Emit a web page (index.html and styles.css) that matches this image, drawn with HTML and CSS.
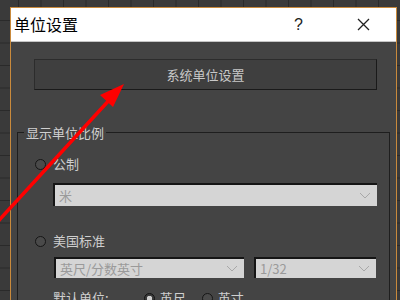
FILE: index.html
```html
<!DOCTYPE html>
<html lang="zh-CN">
<head>
<meta charset="utf-8">
<link rel="stylesheet" href="styles.css">
</head>
<body>
<div class="dialog">
  <div class="titlebar">
    <span class="title">单位设置</span>
    <span class="help">?</span>
    <svg class="close" width="13" height="13" viewBox="0 0 13 13"><path d="M1 1L12 12M12 1L1 12" stroke="#222" stroke-width="1.3" fill="none"/></svg>
  </div>
  <div class="body">
    <div class="sysbtn">系统单位设置</div>
    <fieldset class="group">
      <legend>显示单位比例</legend>
      <div class="row r1"><span class="radio"></span><span>公制</span></div>
      <div class="select s1"><span>米</span><svg width="12" height="7" viewBox="0 0 12 7"><path d="M1 1L6 6L11 1" stroke="#a8a8a8" fill="none"/></svg></div>
      <div class="row r2"><span class="radio"></span><span>美国标准</span></div>
      <div class="selrow">
        <div class="select s2"><span>英尺/分数英寸</span><svg width="12" height="7" viewBox="0 0 12 7"><path d="M1 1L6 6L11 1" stroke="#a8a8a8" fill="none"/></svg></div>
        <div class="select s3"><span>1/32</span><svg width="12" height="7" viewBox="0 0 12 7"><path d="M1 1L6 6L11 1" stroke="#a8a8a8" fill="none"/></svg></div>
      </div>
      <div class="row r4">
        <span class="deflabel">默认单位:</span>
        <span class="radio on"></span><span class="opt">英尺</span>
        <span class="radio"></span><span>英寸</span>
      </div>
    </fieldset>
  </div>
</div>
<svg class="arrow" width="400" height="300" viewBox="0 0 400 300">
  <line x1="-10" y1="230" x2="112" y2="97" stroke="#ff0000" stroke-width="3.5"/>
  <polygon points="124,84 100,95 113,107" fill="#ff0000"/>
</svg>
</body>
</html>
```
FILE: styles.css
```css
html, body {
  margin: 0;
  padding: 0;
  width: 400px;
  height: 300px;
  overflow: hidden;
}
body {
  position: relative;
  font-family: "Noto Sans CJK SC", "Noto Sans", sans-serif;
  background-color: #3a3a3a;
  background-image:
    linear-gradient(to right, #2a2a2a 1px, transparent 1px),
    linear-gradient(to bottom, #2a2a2a 1px, transparent 1px);
  background-size: 22.5px 22.5px;
  background-position: 18px 20px;
  padding-top: 7px;
  box-sizing: border-box;
}
.dialog {
  margin-left: 10px;
  width: 387px;
  height: 320px;
  border: 1px solid #c98a3c;
  border-bottom: none;
  box-sizing: border-box;
  background: #444444;
}
.titlebar {
  height: 34px;
  background: #ffffff;
  border-bottom: 1px solid #c6c6c6;
  box-sizing: border-box;
  display: flex;
  align-items: center;
  position: relative;
}
.title {
  font-size: 16px;
  color: #000;
  margin-left: 3px;
  margin-top: -2px;
}
.help {
  font-family: "Liberation Sans", sans-serif;
  font-size: 16px;
  color: #222;
  margin-left: auto;
  position: relative;
  left: -54px;
}
.close {
  margin-right: 26px;
}
.body {
  color: #cfcfcf;
  font-size: 13px;
  padding-top: 17px;
}
.sysbtn {
  margin-left: 23px;
  width: 343px;
  height: 31px;
  box-sizing: border-box;
  background: #3f3f3f;
  border: 1px solid #2c2c2c;
  border-right-color: #1a1a1a;
  border-bottom-color: #1a1a1a;
  display: flex;
  align-items: center;
  justify-content: center;
  color: #c8c8c8;
  font-size: 13px;
}
.group {
  margin: 34px 0 0 6px;
  width: 373px;
  box-sizing: border-box;
  border: 1px solid #1e1e1e;
  padding: 0 0 20px 6px;
  min-width: 0;
}
.group legend {
  padding: 0 2px;
  font-size: 13px;
  line-height: 17px;
  color: #cfcfcf;
}
.row {
  display: flex;
  align-items: center;
  height: 16px;
  line-height: 16px;
}
.radio {
  width: 9px;
  height: 9px;
  border-radius: 50%;
  border: 1px solid #161616;
  background: #4a4a4a;
  box-sizing: content-box;
  margin-left: 11px;
  margin-right: 7px;
  flex: none;
}
.radio.on {
  background: radial-gradient(circle, #cfcfcf 0 2.5px, #3a3a3a 3px);
  border-color: #111;
}
.r1 { margin-top: 15px; }
.r2 { margin-top: 27px; }
.r4 { margin-top: 12px; }
.r4 .radio { margin-left: 0; margin-right: 5px; }
.deflabel { margin-left: 29px; margin-right: 35px; }
.opt { margin-right: 16px; }
.select {
  display: flex;
  align-items: center;
  justify-content: space-between;
  box-sizing: border-box;
  background: #d5d5d5;
  border-top: 2px solid #151515;
  border-left: 2px solid #151515;
  color: #9a9a9a;
  font-size: 13px;
  padding: 0 6px 0 4px;
}
.s1 {
  margin-top: 11px;
  margin-left: 29px;
  width: 324px;
  height: 23px;
}
.selrow {
  display: flex;
  gap: 10px;
  margin-top: 8px;
  margin-left: 30px;
}
.s2 { width: 190px; height: 21px; }
.s3 { width: 122px; height: 21px; }
.arrow {
  position: absolute;
  left: 0;
  top: 0;
}
```
